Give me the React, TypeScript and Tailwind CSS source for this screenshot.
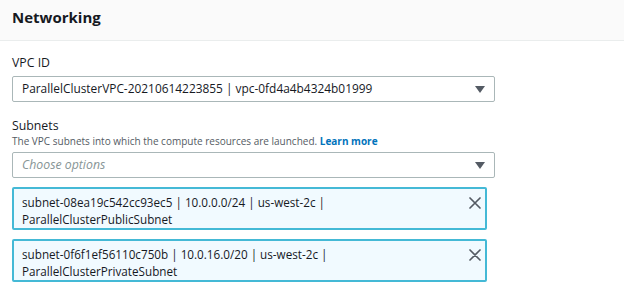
import React from 'react';

const font = { fontFamily: '"Open Sans", "Noto Sans", sans-serif' };

function Caret() {
  return (
    <svg width="10" height="7" viewBox="0 0 10 7" className="shrink-0">
      <path d="M0 0 H10 L5 7 Z" fill="#545b64" />
    </svg>
  );
}

function CloseX() {
  return (
    <svg width="12" height="12" viewBox="0 0 12 12" className="shrink-0">
      <path d="M1 1 L11 11 M11 1 L1 11" stroke="#545b64" strokeWidth="1.7" strokeLinecap="round" />
    </svg>
  );
}

function Token({ line1, line2 }: { line1: string; line2: string }) {
  return (
    <div className="w-[475px] h-[43px] flex items-start justify-between border-2 border-[#44b9d6] bg-[#f1faff] rounded-[2px] pl-[8px] pr-[4px] pt-[5px]">
      <div className="text-[11.7px] leading-[17px] text-[#16191f]">
        <div>{line1}</div>
        <div>{line2}</div>
      </div>
      <div className="pt-[3px]">
        <CloseX />
      </div>
    </div>
  );
}

export default function App() {
  return (
    <div className="w-[624px] h-[288px] bg-white overflow-hidden" style={font}>
      <div className="h-[41px] bg-[#fafafa] border-b border-[#eaeded] px-[12px] flex items-center">
        <h2 className="text-[15px] font-bold text-[#16191f] leading-none pb-[6px]">Networking</h2>
      </div>

      <div className="px-[12px] pt-[13px]">
        <div className="text-[12.3px] leading-[18px] text-[#16191f]">VPC ID</div>
        <div className="mt-[4px] w-[483px] h-[26px] border border-[#aab7b8] rounded-[2px] flex items-center justify-between pl-[9px] pr-[9px]">
          <span className="text-[11.9px] text-[#16191f]">ParallelClusterVPC-20210614223855 | vpc-0fd4a4b4324b01999</span>
          <Caret />
        </div>

        <div className="mt-[15px] text-[12.3px] leading-[17px] text-[#16191f]">Subnets</div>
        <div className="text-[10px] leading-[14px] text-[#545b64]">
          The VPC subnets into which the compute resources are launched.{' '}
          <span className="font-bold text-[#0073bb]">Learn more</span>
        </div>
        <div className="mt-[4px] w-[483px] h-[26px] border border-[#aab7b8] rounded-[2px] flex items-center justify-between pl-[9px] pr-[9px]">
          <span className="text-[12.3px] italic text-[#879596]">Choose options</span>
          <Caret />
        </div>

        <div className="mt-[9px] flex flex-col gap-[9px]">
          <Token line1="subnet-08ea19c542cc93ec5 | 10.0.0.0/24 | us-west-2c |" line2="ParallelClusterPublicSubnet" />
          <Token line1="subnet-0f6f1ef56110c750b | 10.0.16.0/20 | us-west-2c |" line2="ParallelClusterPrivateSubnet" />
        </div>
      </div>
    </div>
  );
}
